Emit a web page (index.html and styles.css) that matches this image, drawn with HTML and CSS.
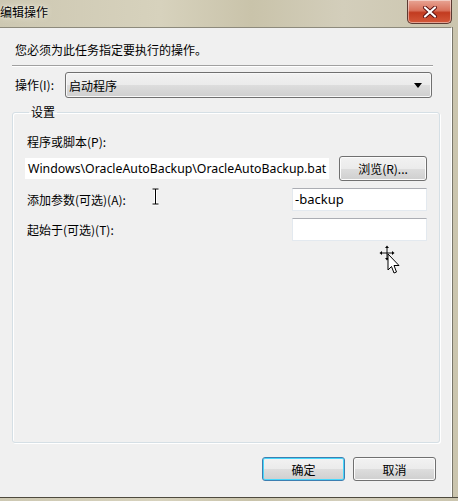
FILE: index.html
```html
<!DOCTYPE html>
<html>
<head>
<meta charset="utf-8">
<link rel="stylesheet" href="styles.css">
</head>
<body>
<div class="window">
  <div class="titlebar">
    <span class="title">编辑操作</span>
    <div class="close">
      <svg width="16" height="12" viewBox="0 0 16 12"><path d="M3 1.5 L13 10.5 M13 1.5 L3 10.5" stroke="#5a1010" stroke-width="4" stroke-linecap="round"/><path d="M3 1.5 L13 10.5 M13 1.5 L3 10.5" stroke="#fff" stroke-width="2.2" stroke-linecap="round"/></svg>
    </div>
  </div>
  <div class="frame-row">
    <div class="client">
      <p class="intro">您必须为此任务指定要执行的操作。</p>
      <div class="sep"></div>
      <div class="combo-row">
        <span class="lbl">操作(I):</span>
        <div class="combo"><span>启动程序</span>
          <svg width="8" height="5" viewBox="0 0 8 5"><path d="M0 0 H8 L4 5 Z" fill="#000"/></svg>
        </div>
      </div>
      <fieldset class="group">
        <legend>设置</legend>
        <div class="lbl prog">程序或脚本(P):</div>
        <div class="path-row">
          <div class="textbox path">Windows\OracleAutoBackup\OracleAutoBackup.bat</div>
          <button class="btn browse">浏览(R)...</button>
        </div>
        <div class="field-row first">
          <span class="lbl">添加参数(可选)(A):</span>
          <div class="textbox small">-backup</div>
        </div>
        <div class="field-row">
          <span class="lbl">起始于(可选)(T):</span>
          <div class="textbox small"></div>
        </div>
      </fieldset>
      <div class="buttons">
        <button class="btn ok">确定</button>
        <button class="btn">取消</button>
      </div>
      <svg class="ibeam" width="9" height="18" viewBox="0 0 9 18"><path d="M1.5 1 H7.5 M4.5 1 V16 M1.5 16 H7.5" stroke="#fff" stroke-width="3"/><path d="M1.5 1 H7.5 M4.5 1 V16 M1.5 16 H7.5" stroke="#000" stroke-width="1"/></svg>
      <svg class="movecur" width="22" height="30" viewBox="0 0 22 30">
        <g stroke="#fff" stroke-width="2.5" fill="#fff">
          <path d="M8 1 V14 M1 8 H15"/>
        </g>
        <path d="M8 2 V13 M2 8 H14" stroke="#000" stroke-width="1"/>
        <path d="M8 0.5 L6 3 H10 Z M8 15.5 L6 13 H10 Z M0.5 8 L3 6 V10 Z M15.5 8 L13 6 V10 Z" fill="#000"/>
        <path d="M9 9 V25 L12.5 21.5 L15 28 L17.5 27 L15 20.5 H20 Z" fill="#fff" stroke="#000" stroke-width="1" stroke-linejoin="miter"/>
      </svg>
    </div>
    <div class="rframe"></div>
  </div>
  <div class="bframe"></div>
</div>
</body>
</html>
```
FILE: styles.css
```css
* { box-sizing: border-box; }
html, body { margin: 0; padding: 0; }
body {
  width: 458px;
  height: 501px;
  overflow: hidden;
  font-family: "Noto Sans", "Noto Sans CJK SC", sans-serif;
  font-size: 12px;
  color: #000;
  background: #cfc9b4;
}
.window {
  width: 458px;
  height: 501px;
  display: flex;
  flex-direction: column;
  background: linear-gradient(90deg, #cdc8b2 0%, #d7d2bd 35%, #c9c3aa 55%, #d3cebb 75%, #cbc5ae 100%);
}
.titlebar {
  height: 27px;
  display: flex;
  justify-content: space-between;
  align-items: flex-start;
}
.title {
  font-family: "Noto Sans CJK SC", sans-serif;
  font-size: 12px;
  line-height: 24px;
  padding-left: 0;
  text-shadow: 0 0 6px #f4f1e6, 0 0 3px #f4f1e6;
}
.close {
  width: 45px;
  height: 24px;
  margin-right: 6px;
  border: 1px solid #5b3a32;
  border-top: none;
  border-radius: 0 0 5px 5px;
  background: linear-gradient(180deg, #e8a595 0%, #d9725c 45%, #c23b20 55%, #d4583a 100%);
  box-shadow: inset 0 0 0 1px rgba(255,255,255,0.45);
  display: flex;
  align-items: center;
  justify-content: center;
}
.frame-row {
  display: flex;
  height: 470px;
}
.client {
  position: relative;
  width: 452px;
  height: 470px;
  background: #f0f0f0;
  border-top: 1px solid #8d8a7c;
  border-right: 1px solid #fff;
  font-family: "Noto Sans CJK SC", sans-serif;
  display: flex;
  flex-direction: column;
}
.rframe {
  width: 6px;
  border-left: 1px solid #7a776a;
}
.bframe {
  height: 4px;
  border-top: 1px solid #4e4a3e;
}
.intro {
  margin: 13px 0 0 15px;
  line-height: 18px;
  height: 18px;
}
.sep {
  margin: 6px 18px 0 12px;
  height: 2px;
  border-top: 1px solid #a0a0a0;
  border-bottom: 1px solid #fff;
}
.combo-row {
  display: flex;
  align-items: center;
  margin: 5px 0 0 15px;
  height: 26px;
}
.lbl { line-height: 16px; }
.combo-row .lbl { width: 50px; }
.combo {
  width: 367px;
  height: 26px;
  border: 1px solid #707070;
  border-radius: 3px;
  background: linear-gradient(180deg, #f2f2f2 0%, #ebebeb 50%, #dddddd 51%, #cfcfcf 100%);
  display: flex;
  align-items: center;
  justify-content: space-between;
  padding: 0 9px 0 3px;
  box-shadow: inset 0 0 0 1px #f8f8f8;
}
.group {
  margin: 7px 0 0 12px;
  width: 428px;
  height: 338px;
  border: 1px solid #d5dfe5;
  box-shadow: inset 1px 1px 0 #fff, 1px 1px 0 #fff;
  border-radius: 3px;
  padding: 0 12px 0 11px;
  min-width: 0;
}
.group legend {
  padding: 0 2px;
  margin-left: 5px;
  line-height: 14px;
}
.group .lbl { margin-left: 3px; }
.prog { margin-top: 15px; }
.path-row {
  display: flex;
  align-items: center;
  margin-top: 6px;
  height: 24px;
}
.textbox {
  background: #fff;
  border: 1px solid #e3e9ef;
  border-top-color: #abadb3;
  height: 23px;
  line-height: 21px;
  font-family: "Noto Sans", "Noto Sans CJK SC", sans-serif;
  white-space: nowrap;
  overflow: hidden;
}
.path {
  width: 306px;
  padding-left: 3px;
  border-color: #f0f0f0;
  font-size: 12.3px;
}
.btn {
  height: 24px;
  border: 1px solid #707070;
  border-radius: 3px;
  background: linear-gradient(180deg, #f2f2f2 0%, #ebebeb 50%, #dddddd 51%, #cfcfcf 100%);
  box-shadow: inset 0 0 0 1px #fcfcfc;
  font-family: "Noto Sans CJK SC", sans-serif;
  font-size: 12px;
  color: #000;
  padding: 0;
}
.browse {
  width: 88px;
  margin-left: 9px;
  height: 25px;
}
.field-row {
  display: flex;
  align-items: center;
  justify-content: space-between;
  height: 23px;
  margin-top: 7px;
}
.field-row.first { margin-top: 8px; }
.small {
  width: 135px;
  padding-left: 2px;
  font-size: 13px;
}
.buttons {
  display: flex;
  justify-content: flex-end;
  gap: 8px;
  margin: 14px 15px 0 0;
}
.buttons .btn { width: 83px; }
.btn.ok {
  border-color: #3c7fb1;
  box-shadow: inset 0 0 0 1px #48d7fb;
}
.ibeam {
  position: absolute;
  left: 151px;
  top: 160px;
}
.movecur {
  position: absolute;
  left: 379px;
  top: 217px;
}
```
